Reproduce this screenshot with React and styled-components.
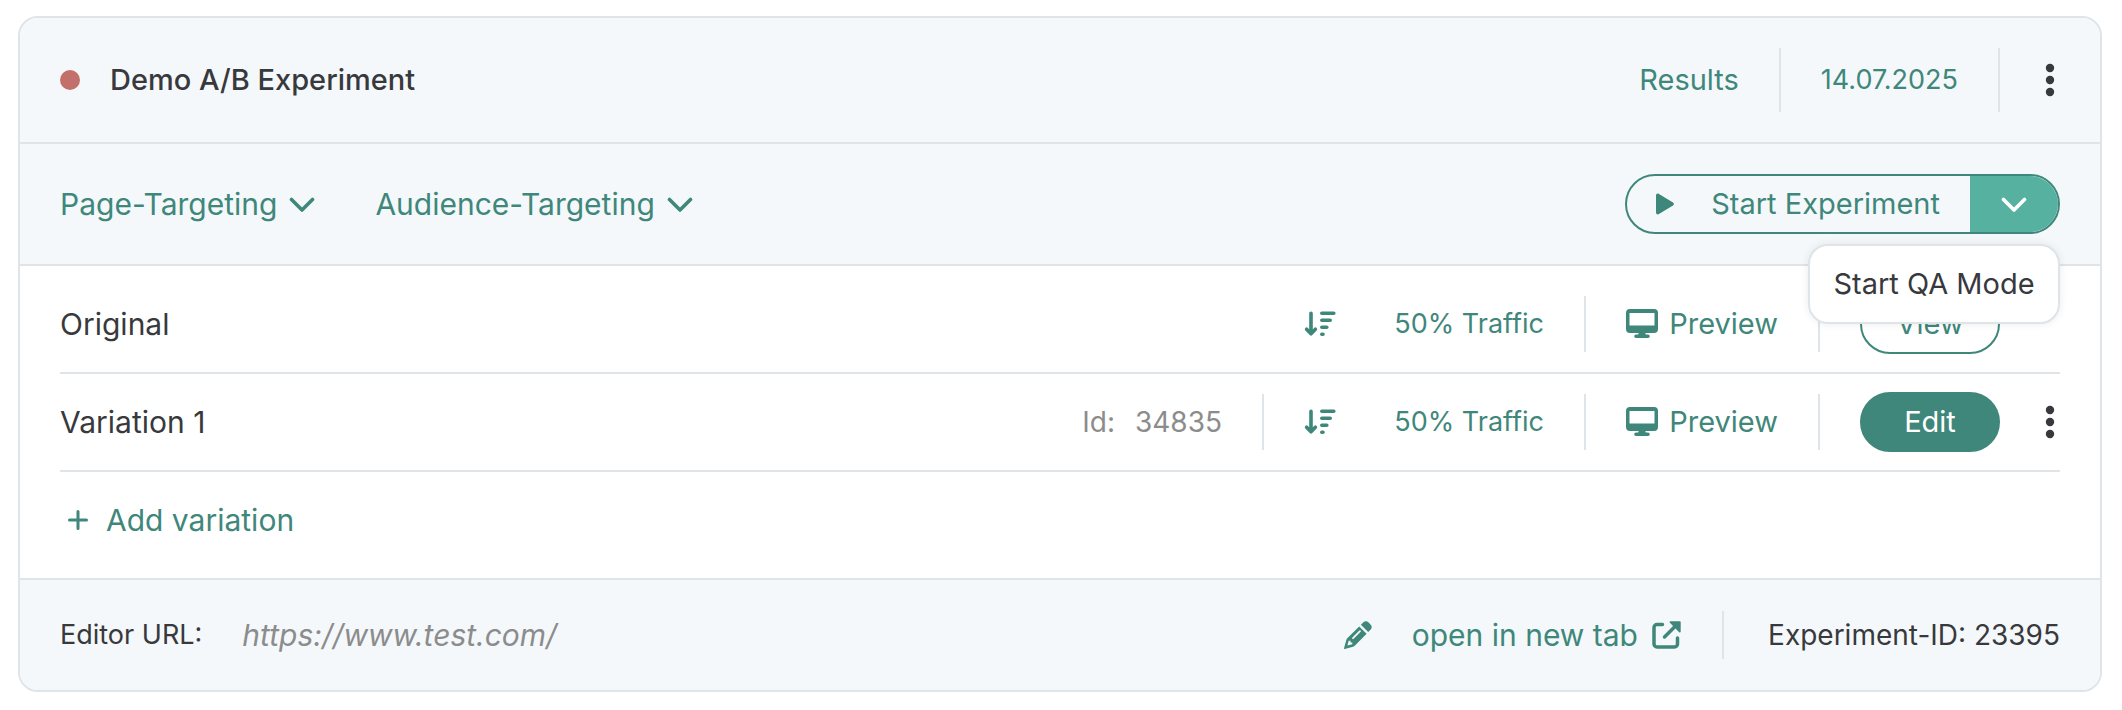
import React, { useState } from 'react';
import styled, { createGlobalStyle } from 'styled-components';

const green = '#3f877a';
const line = '#dfe4e8';
const dark = '#38393d';

const GlobalStyle = createGlobalStyle`
* {
  box-sizing: border-box;
}
body {
  margin: 0;
  background: #fff;
}
body, button, input {
  font-family: Inter, sans-serif;
  font-size: 28px;
  line-height: 40px;
  color: ${dark};
}
`

const Page = styled.main`
padding: 16px 20px 16px 18px;
`

const Card = styled.section`
border: 2px solid ${line};
border-radius: 20px;
background: #fff;
`

const Bar = styled.div`
display: flex;
align-items: center;
justify-content: space-between;
height: ${props => props.$height};
padding: 0 40px;
background: #f4f8fb;
`

const Header = styled(Bar)`
border-bottom: 2px solid ${line};
border-radius: 18px 18px 0 0;
`

const Toolbar = styled(Bar)`
border-bottom: 2px solid ${line};
`

const Footer = styled(Bar)`
border-top: 2px solid ${line};
border-radius: 0 0 18px 18px;
`

const Group = styled.div`
display: flex;
align-items: center;
gap: ${props => props.$gap || '40px'};
`

const Dot = styled.span`
width: 20px;
height: 20px;
border-radius: 50%;
background: #c36f6b;
`

const Title = styled.h1`
margin: 0;
font-size: 29px;
font-weight: 500;
`

const Divider = styled.span`
width: 2px;
height: ${props => props.$height || '56px'};
background: ${line};
`

const TextLink = styled.a`
display: flex;
align-items: center;
justify-content: flex-end;
gap: 14px;
color: ${green};
font-size: ${props => props.$size || '29px'};
text-decoration: none;
white-space: nowrap;
`

const PlainButton = styled.button`
display: flex;
align-items: center;
gap: 12px;
padding: 0;
border: 0;
background: none;
color: ${green};
font-size: ${props => props.$size || '27px'};
white-space: nowrap;
cursor: pointer;
`

const TrafficButton = styled(PlainButton)`
width: 240px;
justify-content: space-between;
`

const PreviewLink = styled(TextLink)`
width: 152px;
justify-content: space-between;
gap: 0;
`

const AddButton = styled(PlainButton)`
gap: 18px;
padding-left: 8px;
`

const Split = styled.div`
position: relative;
display: flex;
width: 435px;
height: 60px;
border: 2px solid ${green};
border-radius: 30px;
`

const StartButton = styled(PlainButton)`
flex: 1;
justify-content: space-between;
padding: 0 30px 0 28px;
`

const ToggleButton = styled(PlainButton)`
width: 88px;
justify-content: center;
border-radius: 0 28px 28px 0;
background: #57b1a1;
color: #fff;
`

const Menu = styled.div`
position: absolute;
top: 68px;
right: -2px;
z-index: 1;
width: 252px;
border: 2px solid ${line};
border-radius: 20px;
background: #fff;
box-shadow: 0 0 8px rgba(0, 0, 0, 0.08);
`

const MenuItem = styled(PlainButton)`
width: 100%;
height: 76px;
justify-content: center;
color: ${dark};
`

const Body = styled.div`
padding: 10px 40px;
`

const Row = styled.div`
display: flex;
align-items: center;
justify-content: space-between;
height: 98px;
border-bottom: 2px solid ${line};

&:last-child {
  height: 96px;
  border-bottom: 0;
}
`

const Name = styled.span`
font-size: 30px;
`

const IdText = styled.span`
display: flex;
gap: 20px;
color: #8c8c8c;
`

const Pill = styled.button`
width: 140px;
height: 60px;
padding: 0;
border: 2px solid ${green};
border-radius: 30px;
background: ${props => props.$filled ? green : '#fff'};
color: ${props => props.$filled ? '#fff' : green};
font-size: 29px;
cursor: pointer;
`

const Spacer = styled.span`
width: 20px;
`

const UrlLabel = styled.label`
font-size: 27px;
`

const UrlInput = styled.input`
width: 400px;
padding: 0;
border: 0;
background: none;
color: #8c8c8c;
font-size: 30px;
font-style: italic;
outline: none;
`

const ExperimentId = styled.span`
min-width: 296px;
text-align: right;
`

const Chevron = () => (
    <svg width="26" height="16" viewBox="0 0 26 16" fill="none" stroke="currentColor" strokeWidth="3.6" strokeLinecap="round" strokeLinejoin="round">
        <path d="M2.5 3.500 13 14 23.500 3.500" />
    </svg>
)

const Dots = () => (
    <svg width="20" height="36" viewBox="0 0 20 36" fill={dark}>
        <circle cx="10" cy="6" r="4.2" />
        <circle cx="10" cy="18" r="4.2" />
        <circle cx="10" cy="30" r="4.2" />
    </svg>
)

const Play = () => (
    <svg width="20" height="24" viewBox="0 0 20 24" fill="currentColor">
        <path d="M1 3.5v17c0 1.6 1.6 2.4 3 1.6l14-8.6c1.2-.8 1.2-2.2 0-3L4 1.9C2.6 1.1 1 1.900 1 3.500z" />
    </svg>
)

const Sort = () => (
    <svg width="32" height="28" viewBox="0 0 32 28" fill="none" stroke="currentColor" strokeWidth="3.6" strokeLinecap="round" strokeLinejoin="round">
        <path d="M7 3.2v20M2.6 19.2 7 23.8l4.4-4.6" />
        <path d="M17.8 3.2h12M17.8 10.2h8.4M17.8 17.2h5M17.8 24.2h1.2" />
    </svg>
)

const Monitor = () => (
    <svg width="32" height="30" viewBox="0 0 32 30" fill="currentColor">
        <path fillRule="evenodd" d="M4 0h24a4 4 0 0 1 4 4v16a4 4 0 0 1-4 4H4a4 4 0 0 1-4-4V4a4 4 0 0 1 4-4zm-.5 4v12.5h25V4z" />
        <path d="M13 23h6l.8 2.5H22a1.8 1.8 0 0 1 0 3.6H10a1.8 1.8 0 0 1 0-3.6h2.2z" />
    </svg>
)

const Pencil = () => (
    <svg width="28" height="28" viewBox="0 0 28 28" fill="currentColor">
        <path d="M15.2 5.4 3.5 17c-.6.6-1 1.3-1.2 2L0 27.2c-.1.5.3.9.8.8L9 25.7c.8-.2 1.4-.6 2-1.200L22.600 12.800z" />
        <path d="m16.9 3.8 2.300-2.300c1.600-1.600 3.800-1.600 5.400 0l1.900 1.900c1.600 1.600 1.600 3.800 0 5.400l-2.300 2.300z" />
        <path d="M9 17.2l7-7" fill="none" stroke="#f4f8fb" strokeWidth="1.8" strokeLinecap="round" />
        <path d="M4.700 19.700 3.400 24.600l4.900-1.300v-1.800H6.500v-1.800z" fill="#f4f8fb" />
    </svg>
)

const External = () => (
    <svg width="30" height="30" viewBox="0 0 30 30" fill="none" stroke="currentColor" strokeWidth="3.5" strokeLinecap="round" strokeLinejoin="round">
        <path d="M10.5 4.5H5a3 3 0 0 0-3 3V24a3 3 0 0 0 3 3h17.5a3 3 0 0 0 3-3v-6M12.5 17 25 4.5" />
        <path d="M18.5 2.2h9.3v9.3z" fill="currentColor" strokeWidth="1.8" />
    </svg>
)

const Plus = () => (
    <svg width="20" height="20" viewBox="0 0 20 20" fill="none" stroke="currentColor" strokeWidth="3" strokeLinecap="round">
        <path d="M10 1.5v17M1.5 10h17" />
    </svg>
)

const Variation = ({ name, id, children }) => (
    <Row>
        <Name>{name}</Name>
        <Group>
            {id && <IdText><span>Id:</span><span>{id}</span></IdText>}
            {id && <Divider />}
            <TrafficButton type="button"><Sort />50% Traffic</TrafficButton>
            <Divider />
            <PreviewLink href="#preview"><Monitor />Preview</PreviewLink>
            <Divider />
            {children}
        </Group>
    </Row>
)

function App() {
    const [menuOpen, setMenuOpen] = useState(true);
    const [url, setUrl] = useState('https://www.test.com/');

    return (
        <Page>
            <GlobalStyle />
            <Card>
                <Header $height="126px">
                    <Group $gap="30px">
                        <Dot />
                        <Title>Demo A/B Experiment</Title>
                    </Group>
                    <Group>
                        <TextLink href="#results">Results</TextLink>
                        <Divider $height="64px" />
                        <PlainButton type="button">14.07.2025</PlainButton>
                        <Divider $height="64px" />
                        <PlainButton type="button" aria-label="Experiment options"><Dots /></PlainButton>
                    </Group>
                </Header>
                <Toolbar $height="122px">
                    <Group $gap="60px">
                        <PlainButton type="button" $size="30px">Page-Targeting<Chevron /></PlainButton>
                        <PlainButton type="button" $size="30px">Audience-Targeting<Chevron /></PlainButton>
                    </Group>
                    <Split>
                        <StartButton type="button" $size="29px"><Play />Start Experiment</StartButton>
                        <ToggleButton type="button" aria-label="More start options" onClick={() => setMenuOpen(!menuOpen)}>
                            <Chevron />
                        </ToggleButton>
                        {menuOpen && <Menu><MenuItem type="button" $size="29px">Start QA Mode</MenuItem></Menu>}
                    </Split>
                </Toolbar>
                <Body>
                    <Variation name="Original">
                        <Pill type="button">View</Pill>
                        <Spacer />
                    </Variation>
                    <Variation name="Variation 1" id="34835">
                        <Pill type="button" $filled>Edit</Pill>
                        <PlainButton type="button" aria-label="Variation options"><Dots /></PlainButton>
                    </Variation>
                    <Row>
                        <AddButton type="button" $size="30px"><Plus />Add variation</AddButton>
                    </Row>
                </Body>
                <Footer $height="112px">
                    <Group>
                        <UrlLabel htmlFor="editor-url">Editor URL:</UrlLabel>
                        <UrlInput id="editor-url" type="text" value={url} onChange={e => setUrl(e.target.value)} />
                    </Group>
                    <Group>
                        <PlainButton type="button" aria-label="Edit URL"><Pencil /></PlainButton>
                        <TextLink href={url} target="_blank" rel="noreferrer" $size="30px">open in new tab<External /></TextLink>
                        <Divider $height="48px" />
                        <ExperimentId>Experiment-ID: 23395</ExperimentId>
                    </Group>
                </Footer>
            </Card>
        </Page>
    );
}

export default App;
